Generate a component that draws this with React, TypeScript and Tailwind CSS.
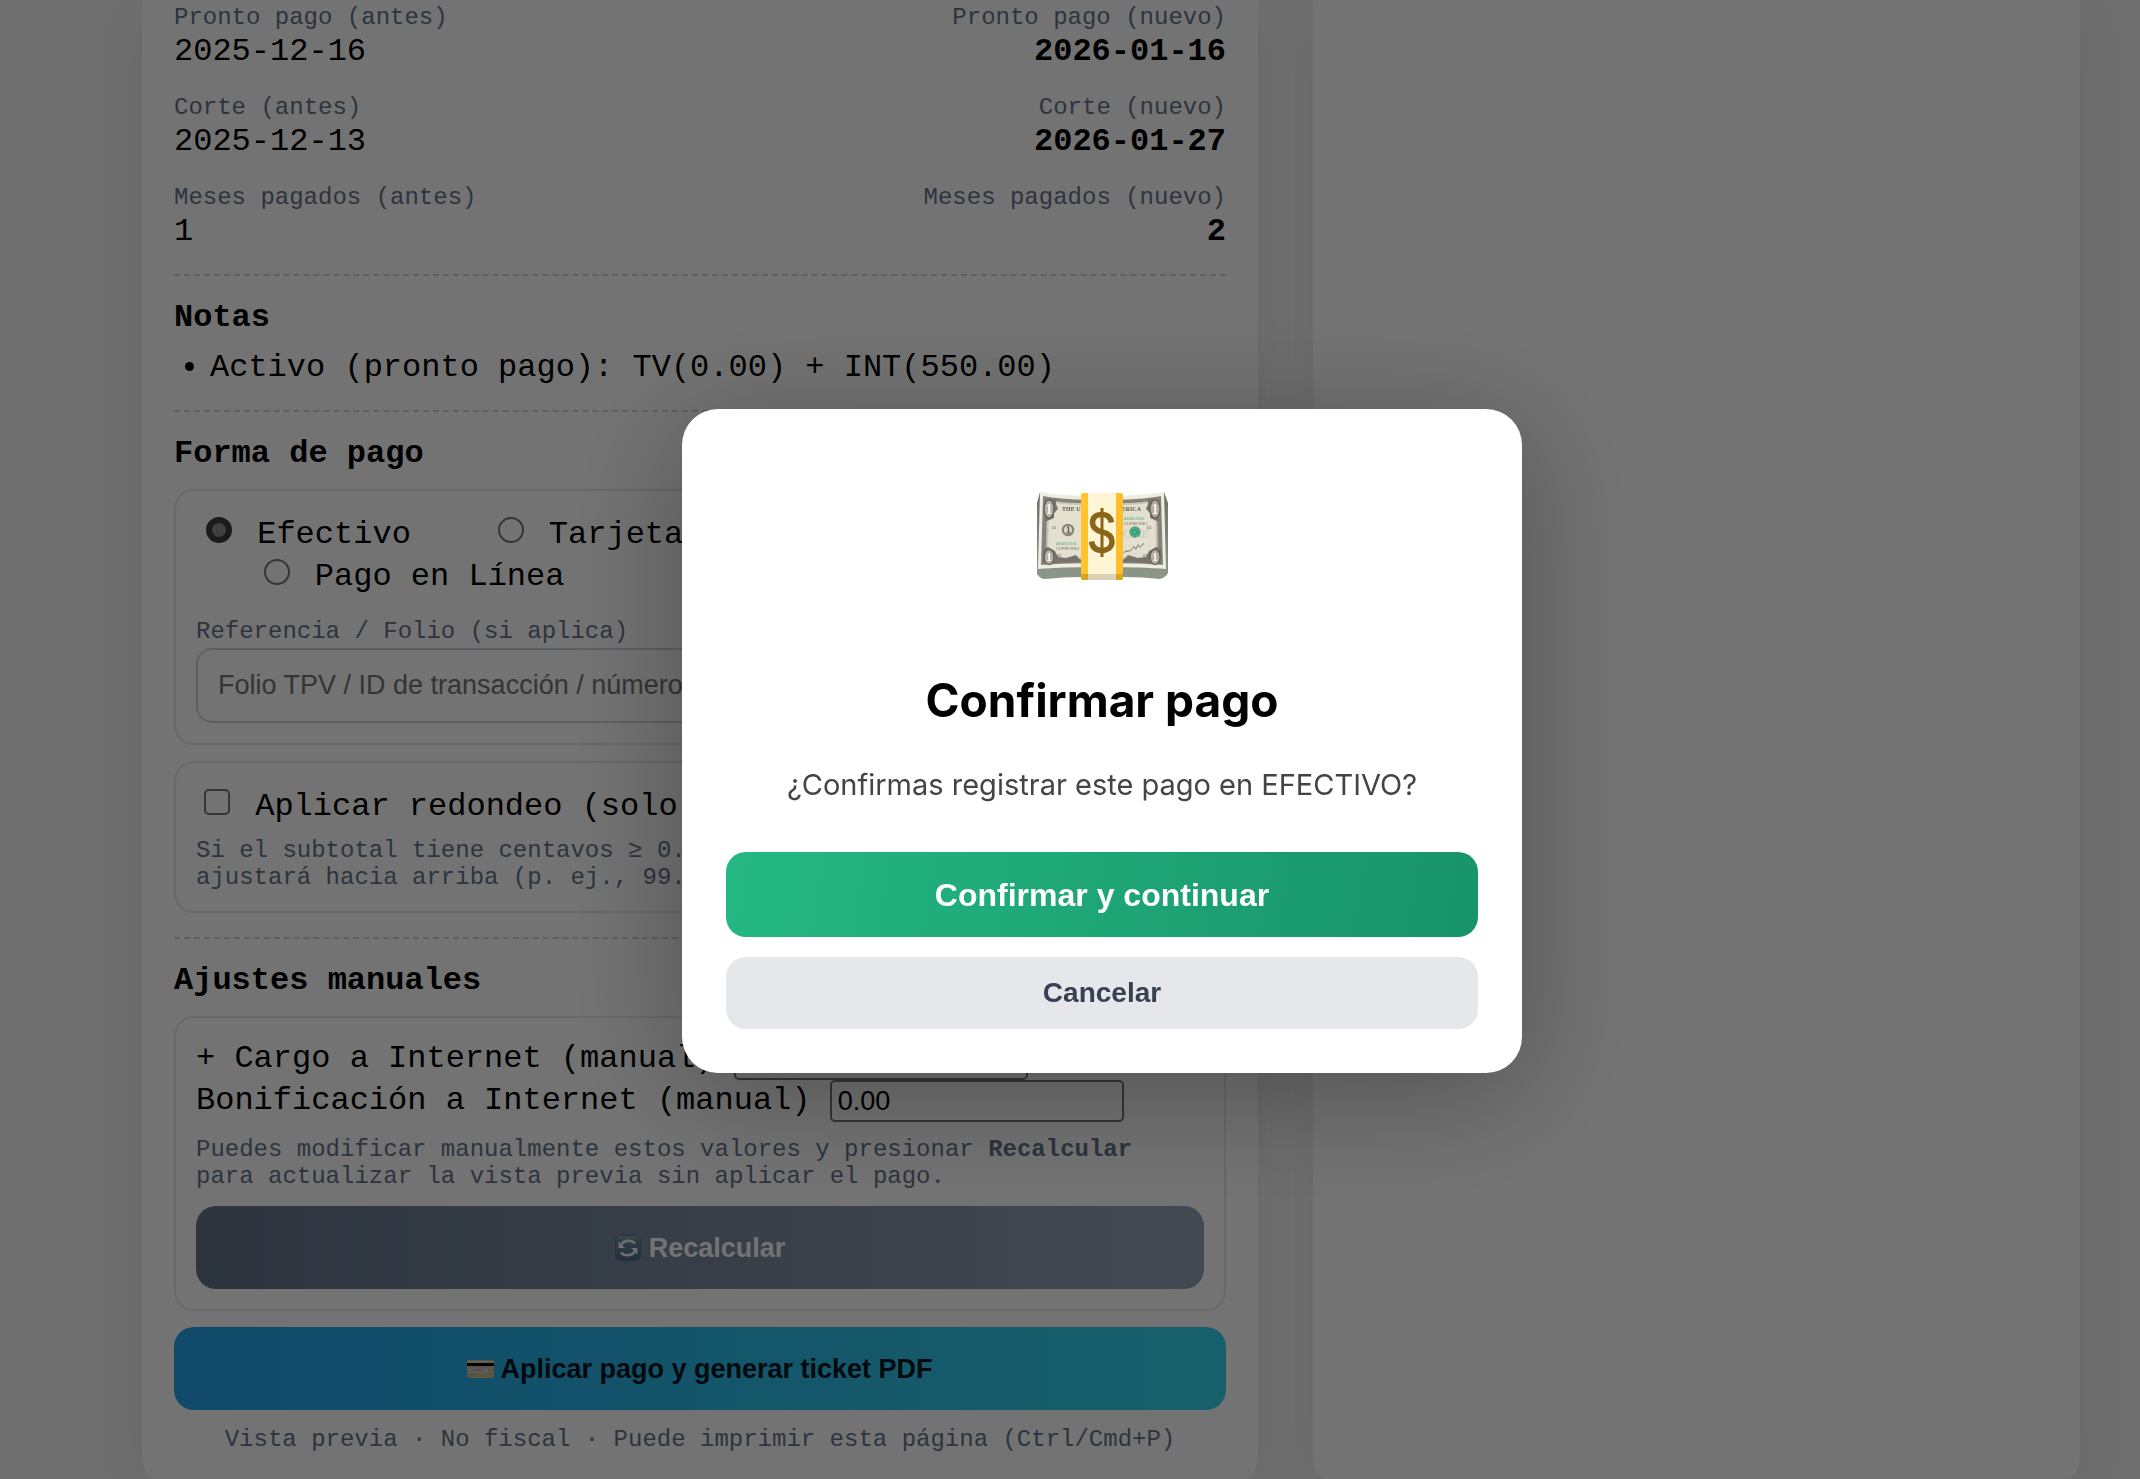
import React from "react";

const rows = [
  { label: "Pronto pago", before: "2025-12-16", after: "2026-01-16" },
  { label: "Corte", before: "2025-12-13", after: "2026-01-27" },
  { label: "Meses pagados", before: "1", after: "2" },
];

function Divider() {
  return <hr className="my-6 border-0 border-t-2 border-dashed border-[#cbd5e1]" />;
}

function Radio({ id, label, checked }: { id: string; label: string; checked?: boolean }) {
  return (
    <>
      <input
        type="radio"
        id={id}
        name="forma"
        defaultChecked={checked}
        className="mt-1.5 mr-1.5 ml-2.5 inline-block size-[26px] appearance-none rounded-full border-2 border-[#767676] bg-white align-baseline checked:border-[6px] checked:border-[#3c3c3c] checked:bg-[#8e8e8e]"
      />
      <label htmlFor={id}>&nbsp;{label}</label>
    </>
  );
}

function RefreshIcon() {
  return (
    <svg viewBox="0 0 26 26" className="size-[26px]" aria-hidden="true">
      <defs>
        <linearGradient id="refresh-bg" x1="0" y1="0" x2="0" y2="1">
          <stop offset="0" stopColor="#8fa6b5" />
          <stop offset="0.2" stopColor="#66889f" />
          <stop offset="1" stopColor="#4c6a85" />
        </linearGradient>
      </defs>
      <rect x="0.5" y="0.5" width="25" height="25" rx="5" fill="url(#refresh-bg)" stroke="#55708a" />
      <g fill="none" stroke="#f2f4f5" strokeWidth="2.6">
        <path d="M6 10A8 6.500 0 0 1 20 8.500" />
        <path d="M20 16A8 6.500 0 0 1 6 17.500" />
      </g>
      <path d="M3.500 6.500V13H10z" fill="#f2f4f5" />
      <path d="M22.500 19.500V13H16z" fill="#f2f4f5" />
    </svg>
  );
}

function CardIcon() {
  return (
    <svg viewBox="0 0 27 18" className="h-[18px] w-[27px]" aria-hidden="true">
      <rect width="27" height="18" rx="1.500" fill="#c9bd8e" />
      <rect y="1" width="27" height="1.500" fill="#e8e0bd" />
      <rect y="3" width="27" height="3" fill="#000" />
      <rect x="2" y="8.500" width="22" height="4" fill="#cfd0d6" />
      <path d="M4 11l2-1.500 1.500 1.500 2-1.500 2 1.500 2-1.500 2 1.500M21 11l1-1.500 1 1.500" fill="none" stroke="#5b6ca8" strokeWidth="0.700" />
      <rect x="3" y="14" width="5" height="1" fill="#a79c70" />
    </svg>
  );
}

function MoneyIcon() {
  return (
    <svg viewBox="0 0 132 90" className="h-[90px] w-[132px]" role="img" aria-label="Dinero">
      <defs>
        <linearGradient id="stack-edge" x1="0" y1="0" x2="0" y2="1">
          <stop offset="0" stopColor="#6a7365" />
          <stop offset="1" stopColor="#8d988a" />
        </linearGradient>
        <linearGradient id="gold" x1="0" y1="0" x2="1" y2="0">
          <stop offset="0" stopColor="#ffc52e" />
          <stop offset="1" stopColor="#fdbd2a" />
        </linearGradient>
      </defs>
      <path d="M4 1L1 12V83Q4 88 9 88Q28 86 46 86H88Q106 86 124 88Q130 86 132 82V12L128 1V60H4z" fill="url(#stack-edge)" />
      <path d="M4 1Q26 5 66 5Q106 5 128 1L130 78Q106 76 66 76Q26 76 2 78z" fill="#efede0" />
      <path d="M7 5Q28 9 66 9Q104 9 125 5L127 74Q104 72 66 72Q28 72 5 74z" fill="#85827b" />
      <path d="M11 9Q30 12.500 66 12.500Q102 12.500 121 9L122 70Q102 68 66 68Q30 68 10 70z" fill="#c9c6b8" />
      <path d="M13 11Q30 14.500 66 14.500Q102 14.500 119 11L120 68Q102 66 66 66Q30 66 12 68z" fill="#e3e0cf" />
      <path d="M9 8H20L20 13L22 18L18 22L18 27L11 30H9zM123 8H112L112 13L110 18L114 22L114 27L121 30H123zM7 72V58L12 56L19 60L22 66L30 67L40 64L46 71zM125 72V58L120 56L113 60L110 66L102 67L92 64L86 71z" fill="#77746e" />
      <g fill="#b3b0a3" stroke="#5f5d58" strokeWidth="1.200">
        <ellipse cx="13" cy="18" rx="5" ry="9" />
        <ellipse cx="119" cy="18" rx="5" ry="9" />
        <ellipse cx="13" cy="66" rx="5" ry="7.500" />
        <ellipse cx="119" cy="66" rx="5" ry="7.500" />
      </g>
      <g fill="#f7f5ea" fontFamily="Liberation Serif, serif" fontWeight="700" textAnchor="middle">
        <text x="13" y="23" fontSize="14">1</text>
        <text x="119" y="23" fontSize="14">1</text>
        <text x="13" y="70" fontSize="12">1</text>
        <text x="119" y="70" fontSize="12">1</text>
      </g>
      <g fontFamily="Liberation Serif, serif" fontWeight="700" fontSize="6" fill="#5b594f">
        <text x="26" y="20">THE UN</text>
        <text x="80" y="20">MERICA</text>
      </g>
      <g fontFamily="Liberation Sans, sans-serif" fontSize="4">
        <text x="20" y="54" fill="#4fb287">A84B1948L</text>
        <text x="20" y="59" fill="#77746a">CUPERTINO</text>
        <text x="88" y="29" fill="#4fb287">A84B1948L</text>
        <text x="88" y="34" fill="#77746a">CUPERTINO</text>
        <text x="16" y="38" fill="#55534b">01</text>
        <text x="21" y="66" fill="#55534b">01</text>
        <text x="111" y="38" fill="#55534b">01</text>
        <text x="107" y="66" fill="#55534b">01</text>
      </g>
      <circle cx="32" cy="39" r="5.200" fill="#d5d2c2" stroke="#85827b" strokeWidth="2" />
      <path d="M31 36h1.500v6M30 42h5" fill="none" stroke="#55534b" strokeWidth="1.200" />
      <text x="87" y="47" fontFamily="Liberation Serif, serif" fontSize="13" fill="#cbc9ba">ONE</text>
      <circle cx="99" cy="41" r="5" fill="#4fb287" stroke="#3a9d74" strokeWidth="1.500" strokeDasharray="1.500 0.700" />
      <circle cx="99" cy="41" r="2.500" fill="none" stroke="#2e8a64" />
      <path d="M88 62q2-4 3-1q1-2 2-1t3-2q2-4 3-1t2-1 2-1 3-1q1-2 2-1" fill="none" stroke="#55534b" strokeWidth="0.700" />
      <rect x="45" y="2" width="42" height="87" rx="2" fill="url(#gold)" />
      <rect x="52" y="2" width="28" height="87" fill="#fdf5d4" />
      <path d="M45 83H87V87Q87 89 85 89H47Q45 89 45 87z" fill="#d9a520" />
      <rect x="52" y="83" width="28" height="6" fill="#d8d1b4" />
      <path
        d="M75.500 31.500C74.500 26 71.500 23.500 66 23.500C60 23.500 56.500 26.500 56.500 31.500C56.500 37 60.500 39.500 66 41C72.500 42.500 76 45 76 50.500C76 56 72 59.500 66 59.500C60 59.500 56.500 56.500 55.500 50.500"
        fill="none"
        stroke="#8a6518"
        strokeWidth="5.500"
      />
      <path d="M66 17V66" stroke="#8a6518" strokeWidth="3" />
    </svg>
  );
}

export default function App() {
  const box = "rounded-[20px] border-2 border-[#e5e7eb] p-5";
  const small = "text-[24px] leading-[27px] text-[#64748b]";
  return (
    <div className="h-screen overflow-hidden bg-[#f5f5f5] font-['Liberation_Mono',monospace] text-[32px] leading-9 text-black">
      <main className="mr-[60px] ml-[142px] grid grid-cols-[1116fr_767fr] gap-[55px]">
        <section className="rounded-b-[28px] bg-white px-8 pt-1 pb-8 shadow-[0_12px_60px_rgba(0,0,0,0.06)]">
          <div className="flex flex-col gap-6">
            {rows.map((r) => (
              <div key={r.label} className="flex justify-between">
                <div>
                  <div className="text-[24px] leading-7 text-[#64748b]">{r.label} (antes)</div>
                  <div className="mt-0.5">{r.before}</div>
                </div>
                <div className="text-right">
                  <div className="text-[24px] leading-7 text-[#64748b]">{r.label} (nuevo)</div>
                  <div className="mt-0.5 font-bold">{r.after}</div>
                </div>
              </div>
            ))}
          </div>
          <Divider />
          <h2 className="font-bold">Notas</h2>
          <ul className="mt-3.5 list-disc pl-9">
            <li>Activo (pronto pago): TV(0.00) + INT(550.00)</li>
          </ul>
          <Divider />
          <h2 className="font-bold">Forma de pago</h2>

          <div className={`mt-[17px] ${box}`}>
            <div className="whitespace-pre">
              <div>
                <Radio id="efectivo" label="Efectivo" checked />
                {"    "}
                <Radio id="tarjeta" label="Tarjeta" />
              </div>
              <div>
                {"   "}
                <Radio id="linea" label="Pago en Línea" />
              </div>
            </div>
            <label htmlFor="folio" className="mt-[23px] block text-[24px] leading-7 text-[#64748b]">
              Referencia / Folio (si aplica)
            </label>
            <input
              id="folio"
              type="text"
              placeholder="Folio TPV / ID de transacción / número"
              className="mt-0.5 block h-[75px] w-full rounded-2xl border-2 border-[#cbd5e1] bg-white px-5 font-['Liberation_Sans',sans-serif] text-[27px] placeholder:text-[#757575]"
            />
          </div>

          <div className={`mt-4 ${box}`}>
            <div>
              <input
                type="checkbox"
                id="redondeo"
                className="mt-1.5 mr-1.5 ml-2 inline-block size-[26px] appearance-none rounded-[5px] border-2 border-[#767676] bg-white align-baseline"
              />
              <label htmlFor="redondeo">&nbsp;Aplicar redondeo (solo</label>
            </div>
            <p className={`mt-3 ${small}`}>
              Si el subtotal tiene centavos ≥ 0.
              <br />
              ajustará hacia arriba (p. ej., 99.
            </p>
          </div>
          <Divider />
          <h2 className="font-bold">Ajustes manuales</h2>

          <div className={`mt-[17px] ${box}`}>
            <div className="flex h-[42px] items-center">
              <label htmlFor="cargo">+ Cargo a Internet (manual)&nbsp;</label>
              <input
                id="cargo"
                type="text"
                defaultValue="0.00"
                className="h-[42px] w-[294px] rounded-[5px] border-2 border-[#767676] bg-white px-1.5 font-['Liberation_Sans',sans-serif] text-[27px] leading-8"
              />
            </div>
            <div className="flex h-[42px] items-center">
              <label htmlFor="bonificacion">Bonificación a Internet (manual)&nbsp;</label>
              <input
                id="bonificacion"
                type="text"
                defaultValue="0.00"
                className="h-[42px] w-[294px] rounded-[5px] border-2 border-[#767676] bg-white px-1.5 font-['Liberation_Sans',sans-serif] text-[27px] leading-8"
              />
            </div>
            <p className={`mt-3.5 ${small}`}>
              Puedes modificar manualmente estos valores y presionar <strong>Recalcular</strong>
              <br />
              para actualizar la vista previa sin aplicar el pago.
            </p>
            <button
              type="button"
              className="mt-4 flex h-[83px] w-full items-center justify-center gap-2 rounded-[20px] bg-[linear-gradient(90deg,#64748b,#94a3b8)] font-['Liberation_Sans',sans-serif] text-[27px] font-bold text-white"
            >
              <RefreshIcon />
              Recalcular
            </button>
          </div>

          <button
            type="button"
            className="mt-4 flex h-[83px] w-full items-center justify-center gap-1.5 rounded-[20px] bg-[linear-gradient(90deg,#24a2e9,#33d5ee)] font-['Liberation_Sans',sans-serif] text-[27px] font-bold text-[#001420]"
          >
            <CardIcon />
            Aplicar pago y generar ticket PDF
          </button>
          <p className={`mt-4 text-center ${small}`}>
            Vista previa · No fiscal · Puede imprimir esta página (Ctrl/Cmd+P)
          </p>
        </section>
        <section className="rounded-b-[28px] bg-white shadow-[0_12px_60px_rgba(0,0,0,0.06)]" aria-label="Ticket" />
      </main>

      <div className="fixed inset-0 flex items-center justify-center bg-black/55 pt-[3px] pl-16">
        <div
          role="dialog"
          aria-modal="true"
          aria-labelledby="confirm-title"
          className="flex w-[840px] flex-col items-center rounded-[36px] bg-white px-11 pt-[82px] pb-11 font-['Inter',sans-serif] shadow-[0_20px_120px_rgba(0,0,0,0.3)]"
        >
          <MoneyIcon />
          <h1 id="confirm-title" className="mt-[90px] text-[46px] leading-[58px] font-bold">
            Confirmar pago
          </h1>
          <p className="mt-9 text-[29px] leading-[39px] text-[#444444]">¿Confirmas registrar este pago en EFECTIVO?</p>
          <button
            type="button"
            className="mt-12 h-[85px] w-full rounded-[20px] bg-[linear-gradient(100deg,#24b883,#18936a)] font-['Liberation_Sans',sans-serif] text-[32px] font-bold text-white"
          >
            Confirmar y continuar
          </button>
          <button
            type="button"
            className="mt-5 h-[72px] w-full rounded-[20px] bg-[#e5e7eb] font-['Liberation_Sans',sans-serif] text-[28px] font-bold text-[#374151]"
          >
            Cancelar
          </button>
        </div>
      </div>
    </div>
  );
}
